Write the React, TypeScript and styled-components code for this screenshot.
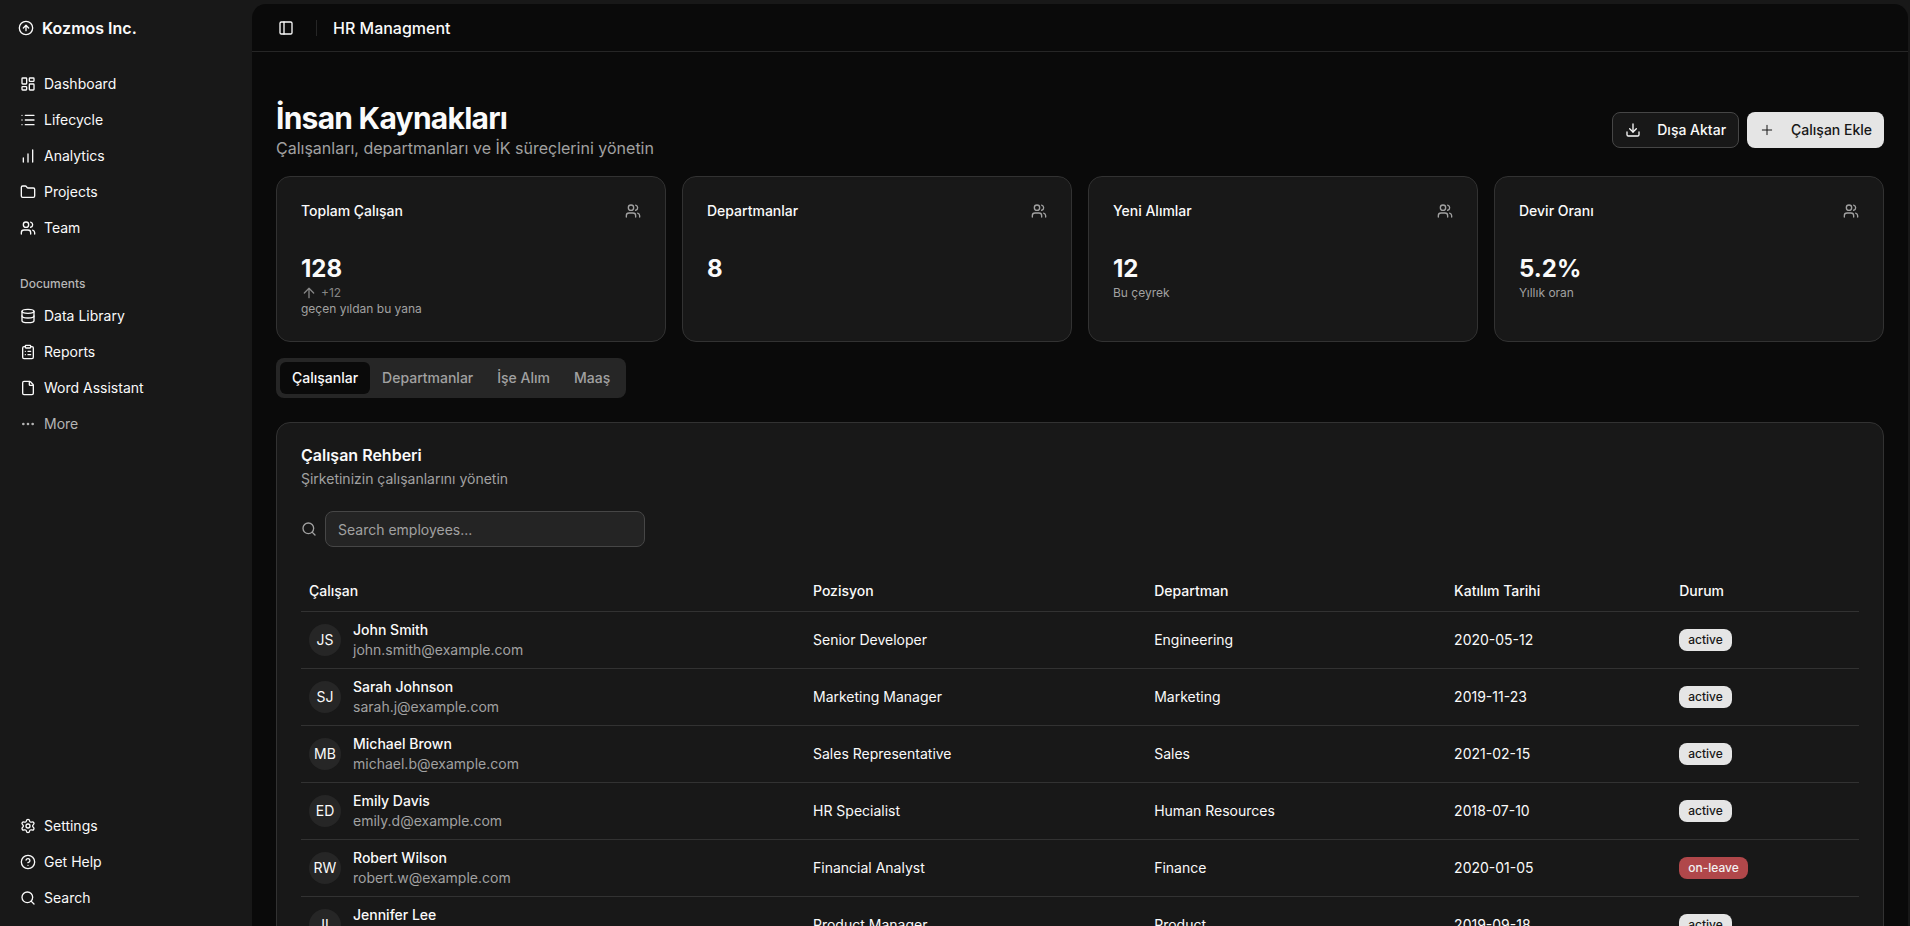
import React from "react";
import styled, { createGlobalStyle, css } from "styled-components";
import {
  ArrowUp,
  ChartNoAxesColumnIncreasing,
  CircleArrowUp,
  CircleQuestionMark,
  ClipboardList,
  Database,
  Download,
  Ellipsis,
  File,
  Folder,
  LayoutDashboard,
  List,
  PanelLeft,
  Plus,
  Search,
  Settings,
  Users,
  type LucideIcon,
} from "lucide-react";

const color = {
  bg: "#0a0a0a",
  surface: "#181818",
  muted: "#262626",
  border: "#323232",
  strong: "#464646",
  text: "#fafafa",
  dim: "#a1a1a1",
  primary: "#e5e5e5",
  ink: "#171717",
  danger: "#b0474a",
};

const GlobalStyle = createGlobalStyle`
  *, *::before, *::after { box-sizing: border-box; }
  html, body, #root { height: 100%; }
  body {
    margin: 0;
    overflow: hidden;
    background: ${color.surface};
    color: ${color.text};
    font: 14px/20px Inter, "Liberation Sans", sans-serif;
    -webkit-font-smoothing: antialiased;
  }
  h1, h2, h3, p, ul { margin: 0; padding: 0; }
  ul { list-style: none; }
  button, input { font: inherit; color: inherit; }
  button { cursor: pointer; border: 0; background: none; }
  a { color: inherit; text-decoration: none; }
  svg { flex: none; }
`;

const Shell = styled.div`
  display: grid;
  grid-template-columns: 252px minmax(0, 1fr);
  height: 100vh;
`;

const Sidebar = styled.aside`
  display: flex;
  flex-direction: column;
  padding: 8px 12px 12px;
`;

const Brand = styled.a`
  display: flex;
  align-items: center;
  gap: 8px;
  height: 40px;
  padding: 0 6px;
  font-size: 16px;
  font-weight: 600;
`;

const NavList = styled.ul<{ $push?: boolean }>`
  display: flex;
  flex-direction: column;
  gap: 4px;
  margin-top: ${(p) => (p.$push ? "auto" : "0")};
`;

const MainNav = styled.nav`
  padding-top: 20px;
`;

const DocsNav = styled.nav`
  padding-top: 24px;
`;

const NavLink = styled.a<{ $dim?: boolean }>`
  display: flex;
  align-items: center;
  gap: 8px;
  height: 32px;
  padding: 0 8px;
  color: ${(p) => (p.$dim ? "#b4b4b4" : color.text)};
`;

const GroupLabel = styled.h3`
  height: 32px;
  padding: 0 8px;
  font-size: 12px;
  line-height: 32px;
  font-weight: 500;
  color: #b6b6b6;
`;

const Main = styled.main`
  display: flex;
  flex-direction: column;
  min-height: 0;
  margin: 4px 2px 0 0;
  overflow: hidden;
  border-radius: 14px 14px 0 0;
  background: ${color.bg};
`;

const TopBar = styled.header`
  display: flex;
  flex: none;
  align-items: center;
  height: 48px;
  padding: 0 20px;
  border-bottom: 1px solid ${color.muted};
`;

const IconButton = styled.button`
  display: grid;
  place-items: center;
  width: 28px;
  height: 28px;
  padding: 0;
`;

const Divider = styled.span`
  width: 1px;
  height: 16px;
  margin: 0 16px;
  background: ${color.muted};
`;

const PageName = styled.h2`
  font-size: 16px;
  line-height: 24px;
  font-weight: 500;
`;

const Content = styled.div`
  display: flex;
  flex-direction: column;
  gap: 16px;
  padding: 48px 24px 0;
`;

const Heading = styled.div`
  display: flex;
  align-items: center;
  justify-content: space-between;
`;

const Title = styled.h1`
  font-size: 30px;
  line-height: 36px;
  font-weight: 700;
  letter-spacing: -0.025em;
`;

const Lead = styled.p`
  font-size: 16px;
  line-height: 24px;
  color: ${color.dim};
`;

const Actions = styled.div`
  display: flex;
  gap: 8px;
`;

const ActionButton = styled.button<{ $primary?: boolean }>`
  display: flex;
  align-items: center;
  gap: 16px;
  height: 36px;
  padding: 0 12px;
  border-radius: 8px;
  font-weight: 500;
  ${(p) =>
    p.$primary
      ? css`
          background: ${color.primary};
          color: ${color.ink};
        `
      : css`
          border: 1px solid ${color.strong};
          background: ${color.surface};
        `}
`;

const StatGrid = styled.section`
  display: grid;
  grid-template-columns: repeat(4, minmax(0, 1fr));
  gap: 16px;
`;

const Card = styled.section`
  padding: 24px;
  border: 1px solid ${color.border};
  border-radius: 14px;
  background: ${color.surface};
`;

const StatCard = styled(Card)`
  min-height: 166px;
`;

const StatTop = styled.div`
  display: flex;
  align-items: center;
  justify-content: space-between;
  padding-bottom: 32px;
  color: ${color.dim};
`;

const StatName = styled.h3`
  font-size: 14px;
  font-weight: 500;
  color: ${color.text};
`;

const StatValue = styled.div`
  font-size: 24px;
  line-height: 32px;
  font-weight: 700;
`;

const StatNote = styled.div`
  font-size: 12px;
  line-height: 16px;
  color: ${color.dim};
`;

const Trend = styled.span`
  display: flex;
  align-items: center;
  gap: 4px;
  color: #858585;
`;

const TabBar = styled.div`
  display: flex;
  align-self: flex-start;
  height: 40px;
  padding: 4px;
  border-radius: 8px;
  background: ${color.muted};
`;

const Tab = styled.button<{ $active?: boolean }>`
  padding: 0 12px;
  border-radius: 6px;
  font-weight: 500;
  background: ${(p) => (p.$active ? color.bg : "transparent")};
  color: ${(p) => (p.$active ? color.text : color.dim)};
`;

const Directory = styled(Card)`
  margin-top: 8px;
`;

const CardTitle = styled.h2`
  font-size: 16px;
  line-height: 16px;
  font-weight: 600;
`;

const CardText = styled.p`
  margin-top: 6px;
  color: ${color.dim};
`;

const SearchRow = styled.label`
  display: flex;
  align-items: center;
  gap: 8px;
  margin-top: 22px;
  color: ${color.dim};
`;

const SearchInput = styled.input`
  width: 320px;
  height: 36px;
  padding: 0 12px;
  border: 1px solid ${color.strong};
  border-radius: 8px;
  outline: 0;
  background: #242424;
  color: ${color.text};
  &::placeholder {
    color: ${color.dim};
    opacity: 1;
  }
`;

const Table = styled.table`
  width: 100%;
  margin-top: 24px;
  border-collapse: collapse;
  table-layout: fixed;
`;

const Row = styled.tr`
  border-bottom: 1px solid ${color.border};
`;

const Th = styled.th<{ $share: number }>`
  width: ${(p) => p.$share}%;
  height: 40px;
  padding: 0 8px;
  font-weight: 500;
  text-align: left;
`;

const Td = styled.td`
  padding: 8px;
`;

const Person = styled.div`
  display: flex;
  align-items: center;
  gap: 12px;
`;

const Avatar = styled.span`
  display: grid;
  flex: none;
  place-items: center;
  width: 32px;
  height: 32px;
  border-radius: 50%;
  background: ${color.muted};
`;

const PersonName = styled.div`
  font-weight: 500;
`;

const Email = styled.div`
  color: ${color.dim};
`;

const Badge = styled.span<{ $danger?: boolean }>`
  display: inline-block;
  height: 22px;
  padding: 0 9px;
  border-radius: 8px;
  font-size: 12px;
  line-height: 22px;
  font-weight: 500;
  vertical-align: middle;
  background: ${(p) => (p.$danger ? color.danger : color.primary)};
  color: ${(p) => (p.$danger ? "#f2f2f2" : color.ink)};
`;

type Entry = [string, LucideIcon, boolean?];

const mainNav: Entry[] = [
  ["Dashboard", LayoutDashboard],
  ["Lifecycle", List],
  ["Analytics", ChartNoAxesColumnIncreasing],
  ["Projects", Folder],
  ["Team", Users],
];
const docsNav: Entry[] = [
  ["Data Library", Database],
  ["Reports", ClipboardList],
  ["Word Assistant", File],
  ["More", Ellipsis, true],
];
const footNav: Entry[] = [
  ["Settings", Settings],
  ["Get Help", CircleQuestionMark],
  ["Search", Search],
];

const stats = [
  { name: "Toplam Çalışan", value: "128", trend: "+12", note: "geçen yıldan bu yana" },
  { name: "Departmanlar", value: "8" },
  { name: "Yeni Alımlar", value: "12", note: "Bu çeyrek" },
  { name: "Devir Oranı", value: "5.2%", note: "Yıllık oran" },
];

const tabs = ["Çalışanlar", "Departmanlar", "İşe Alım", "Maaş"];

const columns: [string, number][] = [
  ["Çalışan", 32.35],
  ["Pozisyon", 21.9],
  ["Departman", 19.25],
  ["Katılım Tarihi", 14.45],
  ["Durum", 12.05],
];

const employees = [
  ["JS", "John Smith", "john.smith@example.com", "Senior Developer", "Engineering", "2020-05-12", "active"],
  ["SJ", "Sarah Johnson", "sarah.j@example.com", "Marketing Manager", "Marketing", "2019-11-23", "active"],
  ["MB", "Michael Brown", "michael.b@example.com", "Sales Representative", "Sales", "2021-02-15", "active"],
  ["ED", "Emily Davis", "emily.d@example.com", "HR Specialist", "Human Resources", "2018-07-10", "active"],
  ["RW", "Robert Wilson", "robert.w@example.com", "Financial Analyst", "Finance", "2020-01-05", "on-leave"],
  ["JL", "Jennifer Lee", "jennifer.l@example.com", "Product Manager", "Product", "2019-09-18", "active"],
];

function NavItems({ items, push }: { items: Entry[]; push?: boolean }) {
  return (
    <NavList $push={push}>
      {items.map(([label, Icon, dim]) => (
        <li key={label}>
          <NavLink href="#" $dim={dim}>
            <Icon size={16} />
            {label}
          </NavLink>
        </li>
      ))}
    </NavList>
  );
}

export default function App() {
  return (
    <>
      <GlobalStyle />
      <Shell>
        <Sidebar>
          <Brand href="#">
            <CircleArrowUp size={16} />
            Kozmos Inc.
          </Brand>
          <MainNav>
            <NavItems items={mainNav} />
          </MainNav>
          <DocsNav>
            <GroupLabel>Documents</GroupLabel>
            <NavItems items={docsNav} />
          </DocsNav>
          <NavItems items={footNav} push />
        </Sidebar>
        <Main>
          <TopBar>
            <IconButton aria-label="Toggle sidebar">
              <PanelLeft size={16} />
            </IconButton>
            <Divider />
            <PageName>HR Managment</PageName>
          </TopBar>
          <Content>
            <Heading>
              <div>
                <Title>İnsan Kaynakları</Title>
                <Lead>Çalışanları, departmanları ve İK süreçlerini yönetin</Lead>
              </div>
              <Actions>
                <ActionButton>
                  <Download size={16} />
                  Dışa Aktar
                </ActionButton>
                <ActionButton $primary>
                  <Plus size={16} strokeWidth={1.5} />
                  Çalışan Ekle
                </ActionButton>
              </Actions>
            </Heading>
            <StatGrid>
              {stats.map((s) => (
                <StatCard key={s.name}>
                  <StatTop>
                    <StatName>{s.name}</StatName>
                    <Users size={16} />
                  </StatTop>
                  <StatValue>{s.value}</StatValue>
                  {s.note && (
                    <StatNote>
                      {s.trend && (
                        <Trend>
                          <ArrowUp size={16} />
                          {s.trend}
                        </Trend>
                      )}
                      {s.note}
                    </StatNote>
                  )}
                </StatCard>
              ))}
            </StatGrid>
            <TabBar role="tablist">
              {tabs.map((t, i) => (
                <Tab key={t} role="tab" aria-selected={i === 0} $active={i === 0}>
                  {t}
                </Tab>
              ))}
            </TabBar>
            <Directory>
              <CardTitle>Çalışan Rehberi</CardTitle>
              <CardText>Şirketinizin çalışanlarını yönetin</CardText>
              <SearchRow>
                <Search size={16} />
                <SearchInput placeholder="Search employees..." aria-label="Search employees" />
              </SearchRow>
              <Table>
                <thead>
                  <Row>
                    {columns.map(([label, share]) => (
                      <Th key={label} $share={share}>
                        {label}
                      </Th>
                    ))}
                  </Row>
                </thead>
                <tbody>
                  {employees.map(([initials, name, email, role, dept, date, status]) => (
                    <Row key={email}>
                      <Td>
                        <Person>
                          <Avatar>{initials}</Avatar>
                          <div>
                            <PersonName>{name}</PersonName>
                            <Email>{email}</Email>
                          </div>
                        </Person>
                      </Td>
                      <Td>{role}</Td>
                      <Td>{dept}</Td>
                      <Td>{date}</Td>
                      <Td>
                        <Badge $danger={status === "on-leave"}>{status}</Badge>
                      </Td>
                    </Row>
                  ))}
                </tbody>
              </Table>
            </Directory>
          </Content>
        </Main>
      </Shell>
    </>
  );
}
